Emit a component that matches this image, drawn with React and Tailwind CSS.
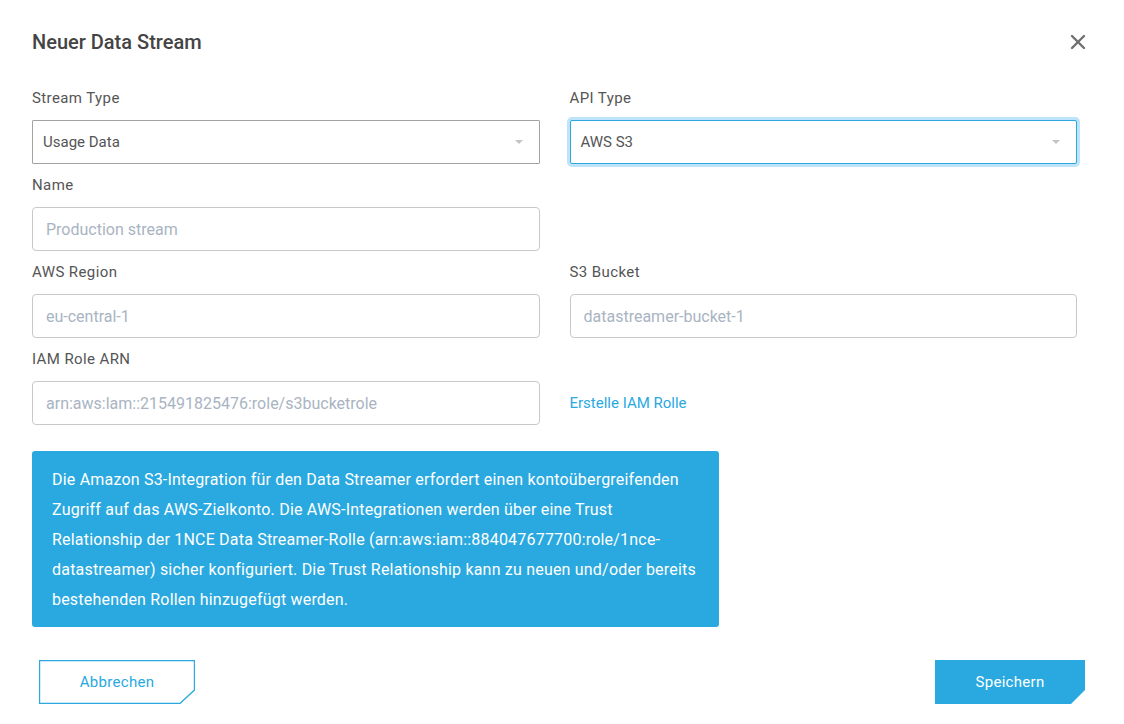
import { X } from 'lucide-react';

const BLUE = '#29a9e0';

function Label({ children }) {
    return <div className="pt-[10px] pb-[11px] text-[15px] leading-[22px] tracking-[0.4px] text-[#555]">{children}</div>;
}

function SelectBox({ value, focused }) {
    return (
        <div
            className={`flex h-[44px] items-center justify-between border bg-white pl-[10px] pr-[16px] text-[15px] text-[#555] ${
                focused
                    ? 'rounded-[2px] border-[#29a9e0] shadow-[0_0_0_3px_#bfe3fa]'
                    : 'rounded-[1px] border-[#a3a3a3]'
            }`}
        >
            <span>{value}</span>
            <span className="h-0 w-0 border-x-[4px] border-t-[4px] border-x-transparent border-t-[#c4c4c4]" />
        </div>
    );
}

function TextInput({ placeholder }) {
    return (
        <input
            readOnly
            placeholder={placeholder}
            className="block h-[44px] w-full rounded-[4px] border border-[#c8c8c8] bg-white px-[13px] text-[16px] text-[#555] outline-none placeholder:text-[#a9b4c2]"
        />
    );
}

function Field({ label, children }) {
    return (
        <div>
            <Label>{label}</Label>
            {children}
        </div>
    );
}

function CutButton({ children, filled, className = '' }) {
    return (
        <button className={`relative flex h-[44px] w-[150px] items-center justify-center text-[15px] tracking-[0.3px] ${filled ? 'text-white' : 'text-[#29a9e0]'} ${className}`}>
            <svg className="absolute inset-0" width="100%" height="100%" viewBox="0 0 150 44" preserveAspectRatio="none">
                {filled ? (
                    <polygon points="0,0 150,0 150,30 136,44 0,44" fill={BLUE} />
                ) : (
                    <polygon points="0.5,0.5 149.5,0.5 149.5,30 135.5,43.5 0.5,43.5" fill="white" stroke={BLUE} strokeWidth="1.3" />
                )}
            </svg>
            <span className="relative">{children}</span>
        </button>
    );
}

export default function App() {
    return (
        <div className="min-h-[724px] w-[1124px] bg-white pl-[32px] pr-[47px] font-['Roboto',sans-serif]">
            {/* header */}
            <div className="flex h-[77px] items-start justify-between pt-[30px]">
                <h1 className="text-[20px] leading-[24px] font-medium text-[#444]">Neuer Data Stream</h1>
                <button className="mr-[-13px] text-[#707070]">
                    <X size={24} strokeWidth={2.4} />
                </button>
            </div>

            {/* form */}
            <div className="grid grid-cols-2 gap-x-[30px]">
                <Field label="Stream Type">
                    <SelectBox value="Usage Data" />
                </Field>
                <Field label="API Type">
                    <SelectBox value="AWS S3" focused />
                </Field>
                <Field label="Name">
                    <TextInput placeholder="Production stream" />
                </Field>
                <div />
                <Field label="AWS Region">
                    <TextInput placeholder="eu-central-1" />
                </Field>
                <Field label="S3 Bucket">
                    <TextInput placeholder="datastreamer-bucket-1" />
                </Field>
                <Field label="IAM Role ARN">
                    <TextInput placeholder="arn:aws:lam::215491825476:role/s3bucketrole" />
                </Field>
                <div className="flex flex-col">
                    <div className="h-[43px]" />
                    <div className="flex h-[44px] items-center">
                        <a className="text-[15px] text-[#29a9e0]">Erstelle IAM Rolle</a>
                    </div>
                </div>
            </div>

            {/* info */}
            <div className="mt-[26px] w-[687px] rounded-[3px] bg-[#29a9e0] px-[20px] pt-[14px] pb-[12px] text-[16px] leading-[30px] tracking-[0.2px] whitespace-nowrap text-white">
                Die Amazon S3-Integration für den Data Streamer erfordert einen kontoübergreifenden
                <br />
                Zugriff auf das AWS-Zielkonto. Die AWS-Integrationen werden über eine Trust
                <br />
                Relationship der 1NCE Data Streamer-Rolle (arn:aws:iam::884047677700:role/1nce-
                <br />
                datastreamer) sicher konfiguriert. Die Trust Relationship kann zu neuen und/oder bereits
                <br />
                bestehenden Rollen hinzugefügt werden.
            </div>

            {/* footer */}
            <div className="mt-[33px] flex justify-between">
                <CutButton className="ml-[7px] w-[156px]">Abbrechen</CutButton>
                <CutButton filled className="mr-[-8px]">Speichern</CutButton>
            </div>
        </div>
    );
}
